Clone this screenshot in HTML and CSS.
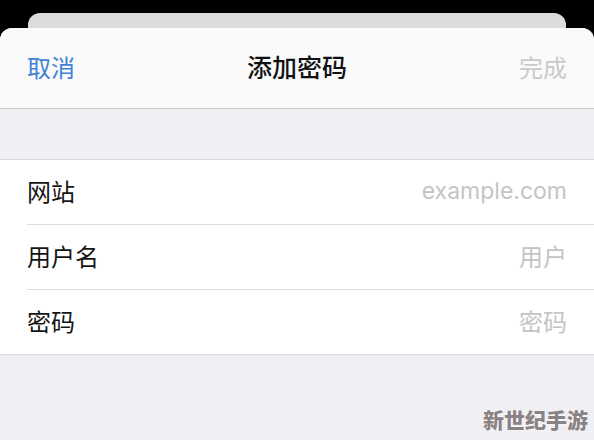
FILE: index.html
```html
<!DOCTYPE html>
<html lang="zh-CN">
<head>
  <meta charset="UTF-8">
  <meta name="viewport" content="width=device-width, initial-scale=1.0">
  <title>添加密码</title>
  <link rel="stylesheet" href="styles.css">
</head>
<body>
  <div class="back-card"></div>
  <div class="sheet">
    <div class="nav-bar">
      <span class="nav-cancel">取消</span>
      <span class="nav-title">添加密码</span>
      <span class="nav-done">完成</span>
    </div>
    <div class="gap"></div>
    <div class="form-list">
      <div class="form-row">
        <span class="row-label">网站</span>
        <span class="row-hint latin">example.com</span>
      </div>
      <div class="form-row">
        <span class="row-label">用户名</span>
        <span class="row-hint">用户</span>
      </div>
      <div class="form-row">
        <span class="row-label">密码</span>
        <span class="row-hint">密码</span>
      </div>
    </div>
  </div>
  <div class="watermark">新世纪手游</div>
</body>
</html>
```

FILE: styles.css
```css
/* 添加密码シート */
body {
  margin: 0;
  width: 594px;
  height: 440px;
  overflow: hidden;
  background-color: #000;
  font-family: "Noto Sans CJK SC", sans-serif;
  position: relative;
}
.back-card {
  height: 16px;
  margin: 13px 28px 0;
  background-color: #dcdcde;
  border-radius: 12px 12px 0 0;
}
.sheet {
  margin-top: -1px;
  height: 412px;
  background-color: #efeff4;
  border-radius: 12px 12px 0 0;
  overflow: hidden;
}
.nav-bar {
  height: 76px;
  padding: 0 27px 4px;
  background-color: #fafafb;
  border-bottom: 1px solid #c9c9cd;
  display: flex;
  align-items: center;
  justify-content: space-between;
  position: relative;
}
.nav-cancel {
  font-size: 24px;
  color: #3f82d6;
}
.nav-title {
  font-size: 25px;
  font-weight: 500;
  color: #111;
  position: absolute;
  left: 0;
  right: 0;
  text-align: center;
  pointer-events: none;
}
.nav-done {
  font-size: 24px;
  color: #c9c9cc;
}
.gap {
  height: 50px;
}
.form-list {
  background-color: #fff;
  border-top: 1px solid #d9d9dc;
  border-bottom: 1px solid #d9d9dc;
  padding-left: 27px;
}
.form-row {
  height: 61px;
  padding: 0 27px 3px 0;
  display: flex;
  align-items: center;
  justify-content: space-between;
  border-bottom: 1px solid #dedee1;
}
.form-row:last-child {
  border-bottom: none;
}
.row-label {
  font-size: 24px;
  color: #151515;
}
.row-hint {
  font-size: 24px;
  color: #c4c4c7;
}
.row-hint.latin {
  font-family: Inter, "Noto Sans CJK SC", sans-serif;
  font-size: 23px;
}
.watermark {
  position: absolute;
  right: 6px;
  bottom: 6px;
  font-size: 21px;
  font-weight: 900;
  color: #8b8285;
  text-shadow: 0 0 2px #fff, 0 0 2px #fff;
  letter-spacing: 0;
}
```
